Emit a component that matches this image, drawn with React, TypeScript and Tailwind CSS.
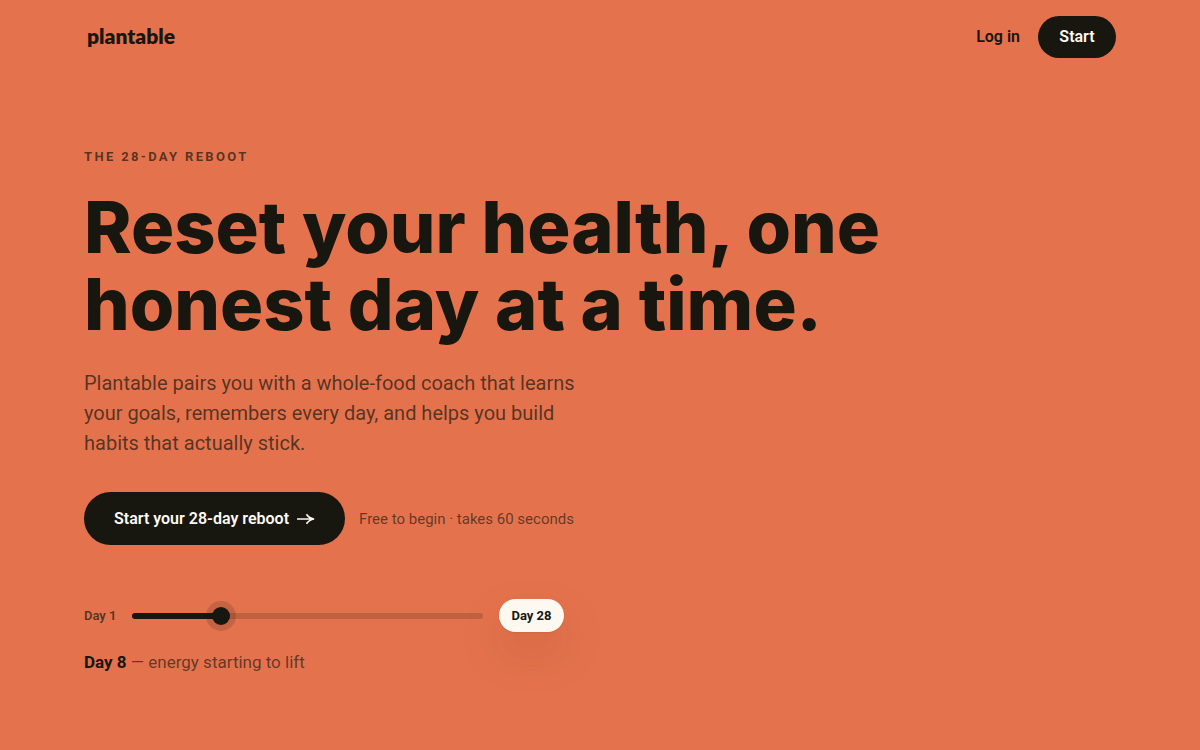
import { useState } from 'react';

const stages = [
  { until: 4, text: 'clearing things out' },
  { until: 12, text: 'energy starting to lift' },
  { until: 20, text: 'cravings losing their grip' },
  { until: 28, text: 'a new normal' },
];

function Header() {
  return (
    <header className="flex items-center justify-between px-[7vw] py-4">
      <a href="#" className="px-[3px] pb-0.5 font-[Lato,sans-serif] text-[21px] leading-6 font-extrabold">
        plantable
      </a>
      <nav className="flex items-center gap-[18px] text-base font-semibold">
        <a href="#login">Log in</a>
        <button type="button" className="h-[42px] w-[78px] rounded-full bg-[#17160f] text-[#fdf9f1]">
          Start
        </button>
      </nav>
    </header>
  );
}

function DaySlider() {
  const [progress, setProgress] = useState(24);
  const day = Math.max(1, Math.ceil(1 + (progress / 100) * 27));
  const stage = stages.find(s => day <= s.until) ?? stages[stages.length - 1];

  return (
    <div className="mt-[54px] max-w-[480px]">
      <div className="flex items-center gap-4">
        <label htmlFor="day" className="w-8 shrink-0 text-[13px] leading-4 font-semibold whitespace-nowrap text-[#17160f]/70">
          Day 1
        </label>
        <input
          id="day"
          type="range"
          min={0}
          max={100}
          value={progress}
          onChange={e => setProgress(Number(e.target.value))}
          className="h-1.5 min-w-0 flex-1 cursor-pointer appearance-none rounded-full [&::-webkit-slider-thumb]:size-[18px] [&::-webkit-slider-thumb]:appearance-none [&::-webkit-slider-thumb]:rounded-full [&::-webkit-slider-thumb]:bg-[#17160f] [&::-webkit-slider-thumb]:shadow-[0_0_0_6px_rgba(23,22,15,0.15)]"
          style={{
            background: `linear-gradient(to right, #17160f ${progress + 1}%, rgba(23, 22, 15, 0.18) ${progress + 1}%)`,
          }}
        />
        <span className="flex h-[33px] w-[65px] shrink-0 items-center justify-center rounded-full bg-[#fdf9f1] text-[13px] leading-4 font-bold shadow-[0_1px_2px_rgba(23,22,15,0.06),0_20px_44px_rgba(120,50,20,0.18)]">
          Day 28
        </span>
      </div>
      <p className="mt-[18px] text-[17px] leading-6 text-[#17160f]/65">
        <strong className="font-bold text-[#17160f]">Day {day}</strong> — {stage.text}
      </p>
    </div>
  );
}

export default function App() {
  return (
    <div className="min-h-screen bg-[#e4734d] font-[Roboto,sans-serif] text-[#17160f]">
      <Header />

      {/* Hero */}
      <main className="px-[7vw] pt-[74px] pb-16">
        <p className="text-[13px] leading-[18px] font-bold tracking-[0.18em] text-[#17160f]/70 uppercase">
          The 28-day reboot
        </p>
        <h1 className="mt-[22px] max-w-[860px] font-[Inter,sans-serif] text-[72px] leading-[77px] font-extrabold">
          Reset your health, one honest day at a time.
        </h1>
        <p className="mt-[26px] max-w-[510px] text-xl leading-[30px] text-[#17160f]/70">
          Plantable pairs you with a whole-food coach that learns your goals, remembers every day, and helps you build
          habits that actually stick.
        </p>

        <div className="mt-[34px] flex flex-wrap items-center gap-3.5">
          <button
            type="button"
            className="flex h-[53px] items-center gap-2 rounded-full bg-[#17160f] px-[30px] text-base font-semibold text-[#fdf9f1]"
          >
            Start your 28-day reboot
            <svg viewBox="0 0 18 12" className="h-3 w-[18px]" fill="none" stroke="currentColor" strokeWidth="1.7" aria-hidden="true">
              <path d="M0 6h16.500M9.500 1.200c1.600 2.500 4 4.200 7.500 4.800-3.500.6-5.900 2.300-7.500 4.800" />
            </svg>
          </button>
          <span className="text-[15px] leading-5 text-[#17160f]/65">Free to begin · takes 60 seconds</span>
        </div>

        <DaySlider />
      </main>
    </div>
  );
}
